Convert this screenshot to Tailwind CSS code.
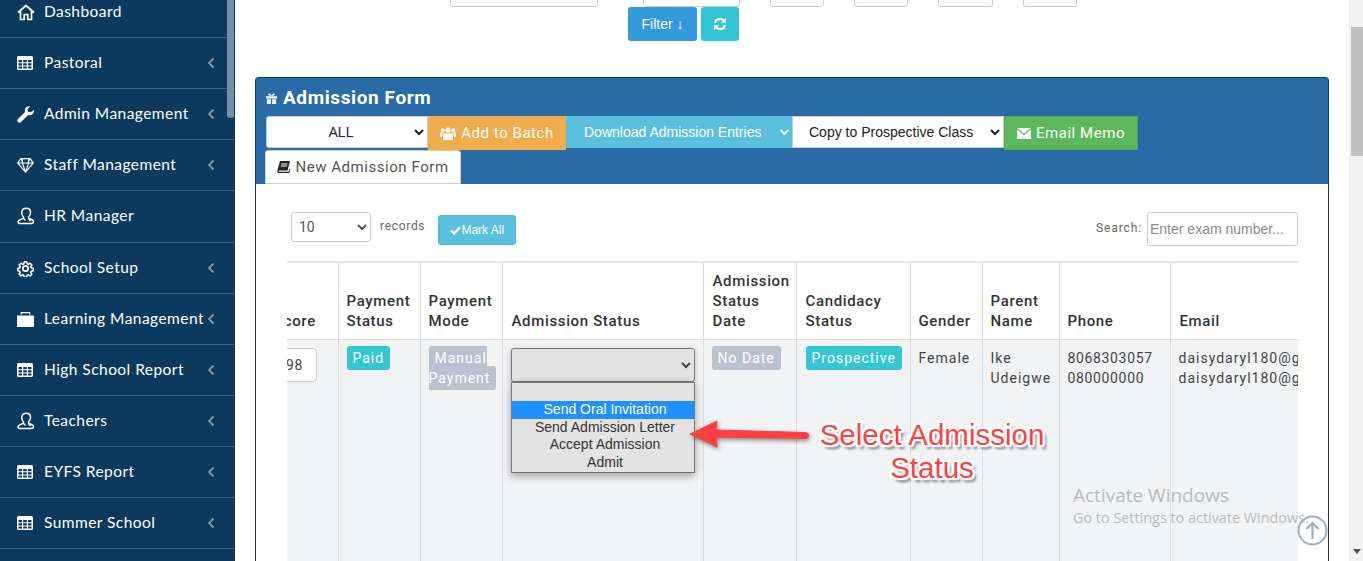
<!DOCTYPE html>
<html lang="en">
<head>
  <meta charset="UTF-8">
  <title>Admission Form</title>
  <script src="https://cdn.jsdelivr.net/npm/@tailwindcss/browser@4"></script>
</head>
<body class="bg-white">

<!-- icon sprites -->
<svg class="hidden">
  <symbol id="i-table" viewBox="0 0 16 14"><path fill="currentColor" fill-rule="evenodd" d="M1.500 0h13A1.500 1.500 0 0 1 16 1.500v11a1.500 1.500 0 0 1-1.500 1.500h-13A1.500 1.500 0 0 1 0 12.500v-11A1.500 1.500 0 0 1 1.500 0zM1.500 4v2.200h3.500V4zm4.700 0v2.200h3.600V4zm4.800 0v2.200h3.500V4zM1.500 7.300v2.200h3.500V7.300zm4.700 0v2.200h3.600V7.300zm4.800 0v2.200h3.500V7.300zM1.500 10.600v2h3.500v-2zm4.700 0v2h3.600v-2zm4.800 0v2h3.500v-2z"/></symbol>
  <symbol id="i-user" viewBox="0 0 18 18"><path fill="none" stroke="currentColor" stroke-width="1.500" stroke-linejoin="round" d="M9.500 1.200c2.600 0 4 2 4 4.300 0 1.700-.8 3.300-1.900 4.300v1.300c1 .9 5 1.300 5 3.200 0 1.300-1.200 2.200-2.500 2.200H2.800C1.800 16.500 1 15.700 1 14.800c0-2 4.200-2.600 5.500-3.700V9.800C5.300 8.800 4.700 7.200 4.700 5.500c0-2.500 2-4.300 4.800-4.300z"/><path fill="none" stroke="currentColor" stroke-width="1.300" d="M11.500 11.500l2 2.500M6.500 11.500l2 2"/></symbol>
  <symbol id="i-chev" viewBox="0 0 8 12"><path fill="none" stroke="currentColor" stroke-width="1.800" d="M6.500 1.500L2 6l4.500 4.500"/></symbol>
</svg>

<div class="relative flex h-[561px] w-[1363px] overflow-hidden font-['Roboto',sans-serif] text-[14px] text-[#333]">

  <!-- Sidebar -->
  <aside class="relative w-[235px] shrink-0 overflow-hidden bg-[#0b3a5e] font-['Lato',sans-serif] text-[15.500px] tracking-[0.45px] text-white">
    <nav class="-mt-[13px]">
      <a class="flex h-[51px] items-center border-b border-[#3f6484] pl-[17px]">
        <svg class="w-[18px] h-[17px]" viewBox="0 0 18 17"><path fill="none" stroke="white" stroke-width="1.700" stroke-linejoin="round" d="M1 8.500L9 1.500l8 7M3.500 7v8.500h3.700v-5h3.600v5h3.700V7"/></svg>
        <span class="ml-[9px]">Dashboard</span>
      </a>
      <a class="flex h-[51px] items-center border-b border-[#3f6484] pl-[17px]">
        <svg class="w-[16px] h-[14px] text-white"><use href="#i-table"/></svg>
        <span class="ml-[11px]">Pastoral</span>
        <svg class="absolute left-[207px] w-[8px] h-[12px] text-[#8297a8]"><use href="#i-chev"/></svg>
      </a>
      <a class="flex h-[51px] items-center border-b border-[#3f6484] pl-[17px]">
        <svg class="w-[17px] h-[17px]" viewBox="0 0 17 17"><path fill="white" d="M16.800 4c.3 1.800-.2 3.300-1.500 4.300-1.200 1-2.700 1.100-4.100.6L4 16c-.9.900-2.200.9-3 .1-.9-.8-.9-2.100 0-3l7-7.200c-.5-1.400-.3-2.900.7-4.100C9.800.600 11.400.100 13.100.400L10.500 3l.4 2.700 2.700.5z"/></svg>
        <span class="ml-[10px]">Admin Management</span>
        <svg class="absolute left-[207px] w-[8px] h-[12px] text-[#8297a8]"><use href="#i-chev"/></svg>
      </a>
      <a class="flex h-[51px] items-center border-b border-[#3f6484] pl-[17px]">
        <svg class="w-[17px] h-[15px]" viewBox="0 0 17 15"><path fill="white" fill-rule="evenodd" d="M3.500 0h10L17 5l-8.500 10L0 5zM4 1.300L1.900 4.400h3zM6 1.300L5.900 4.400h5.200L11 1.300zM13 1.300l-1 3.100h3.100zM2 5.600l5 5.800-2-5.800zM6.200 5.600l2.300 7 2.300-7zM12 5.600l-2 5.800 5-5.800z"/></svg>
        <span class="ml-[10px]">Staff Management</span>
        <svg class="absolute left-[207px] w-[8px] h-[12px] text-[#8297a8]"><use href="#i-chev"/></svg>
      </a>
      <a class="flex h-[52px] items-center border-b border-[#3f6484] pb-[2px] pl-[17px]">
        <svg class="w-[18px] h-[18px] text-white"><use href="#i-user"/></svg>
        <span class="ml-[9px]">HR Manager</span>
      </a>
      <a class="flex h-[51px] items-center border-b border-[#3f6484] pl-[17px]">
        <svg class="w-[17px] h-[17px]" viewBox="0 0 24 24"><path fill="none" stroke="white" stroke-width="2.400" stroke-linejoin="round" d="M10 1.500h4l.6 3.200 1.900.8 2.700-1.800 2.800 2.800-1.800 2.700.8 1.900 3.200.6v4l-3.200.6-.8 1.900 1.800 2.700-2.800 2.800-2.700-1.800-1.900.8-.6 3h-4l-.6-3-1.900-.8-2.700 1.800-2.800-2.800 1.800-2.700-.8-1.900-3-.6v-4l3-.6.8-1.900-1.800-2.700 2.800-2.800 2.700 1.800 1.900-.8z" transform="translate(1.200 1.200) scale(.9)"/><circle cx="12" cy="12" r="3.800" fill="none" stroke="white" stroke-width="2.400"/></svg>
        <span class="ml-[10px]">School Setup</span>
        <svg class="absolute left-[207px] w-[8px] h-[12px] text-[#8297a8]"><use href="#i-chev"/></svg>
      </a>
      <a class="flex h-[51px] items-center border-b border-[#3f6484] pl-[17px]">
        <svg class="w-[17px] h-[15px]" viewBox="0 0 17 15"><path fill="white" d="M0 3.500h17V15H0zM3.500 2.500V1.200C3.500.500 4 0 4.700 0h7.600c.7 0 1.200.500 1.200 1.200v1.300h-1.300V1.300H4.800v1.200z"/></svg>
        <span class="ml-[10px]">Learning Management</span>
        <svg class="absolute left-[207px] w-[8px] h-[12px] text-[#8297a8]"><use href="#i-chev"/></svg>
      </a>
      <a class="flex h-[51px] items-center border-b border-[#3f6484] pl-[17px]">
        <svg class="w-[16px] h-[14px] text-white"><use href="#i-table"/></svg>
        <span class="ml-[11px]">High School Report</span>
        <svg class="absolute left-[207px] w-[8px] h-[12px] text-[#8297a8]"><use href="#i-chev"/></svg>
      </a>
      <a class="flex h-[51px] items-center border-b border-[#3f6484] pl-[17px]">
        <svg class="w-[18px] h-[18px] text-white"><use href="#i-user"/></svg>
        <span class="ml-[9px]">Teachers</span>
        <svg class="absolute left-[207px] w-[8px] h-[12px] text-[#8297a8]"><use href="#i-chev"/></svg>
      </a>
      <a class="flex h-[51px] items-center border-b border-[#3f6484] pl-[17px]">
        <svg class="w-[16px] h-[14px] text-white"><use href="#i-table"/></svg>
        <span class="ml-[11px]">EYFS Report</span>
        <svg class="absolute left-[207px] w-[8px] h-[12px] text-[#8297a8]"><use href="#i-chev"/></svg>
      </a>
      <a class="flex h-[51px] items-center border-b border-[#3f6484] pl-[17px]">
        <svg class="w-[16px] h-[14px] text-white"><use href="#i-table"/></svg>
        <span class="ml-[11px]">Summer School</span>
        <svg class="absolute left-[207px] w-[8px] h-[12px] text-[#8297a8]"><use href="#i-chev"/></svg>
      </a>
    </nav>
    <div class="absolute left-[227px] top-0 h-[118px] w-[7px] rounded-b-[3px] bg-[#7590a6]"></div>
  </aside>

  <!-- Main -->
  <main class="relative w-[1114px] shrink-0">
    <!-- filter inputs cut off by the scroll position -->
    <div class="flex h-[7px] overflow-hidden">
      <div class="ml-[215px] -mt-[24px] h-[31px] w-[148px] rounded-[3px] border border-[#ccc]"></div>
      <div class="ml-[45px] -mt-[24px] h-[31px] w-[97px] rounded-[3px] border border-[#ccc]"></div>
      <div class="ml-[30px] -mt-[24px] h-[31px] w-[54px] rounded-[3px] border border-[#ccc]"></div>
      <div class="ml-[30px] -mt-[24px] h-[31px] w-[54px] rounded-[3px] border border-[#ccc]"></div>
      <div class="ml-[30px] -mt-[24px] h-[31px] w-[55px] rounded-[3px] border border-[#ccc]"></div>
      <div class="ml-[30px] -mt-[24px] h-[31px] w-[54px] rounded-[3px] border border-[#ccc]"></div>
    </div>
    <div class="ml-[393px] flex gap-[4px]">
      <button class="h-[34px] w-[69px] rounded-[3px] bg-[#3498db] font-['Liberation_Sans',sans-serif] text-[14px] text-white">Filter ↓</button>
      <button class="flex h-[34px] w-[38px] items-center justify-center rounded-[3px] bg-[#33c5d3]">
        <svg class="w-[14px] h-[14px]" viewBox="0 0 14 14"><path fill="none" stroke="white" stroke-width="2.200" d="M2 6c.4-2.400 2.400-4 5-4 1.700 0 3 .8 3.900 1.900M12 8c-.4 2.400-2.400 4-5 4-1.700 0-3-.8-3.900-1.900"/><path fill="white" d="M13 .8v5H8zM1 13.200v-5h5z"/></svg>
      </button>
    </div>

    <!-- Panel -->
    <section class="ml-[20px] mt-[36px] w-[1074px] rounded-t-[3px] border border-[#0b3a5e] h-[600px]">
      <header class="h-[106px] bg-[#286ba6]">
        <h2 class="flex h-[38px] items-center pl-[10px] pt-[2px] text-[19px] font-bold tracking-[0.6px] text-white">
          <svg class="mr-[6px] w-[11px] h-[11px]" viewBox="0 0 12 12"><path fill="white" d="M0 3.500h12V6H0zM1 6.800h4.300V12H1zM6.700 6.800H11V12H6.700zM6 3C4 3 2.500 2.500 2.500 1.300 2.500.300 4 -.200 6 2.500 8 -.200 9.500.300 9.500 1.300 9.500 2.500 8 3 6 3z"/></svg>
          Admission Form
        </h2>
        <div class="flex h-[34px] items-start pl-[10px]">
          <select class="h-[32px] w-[162px] rounded-l-[3px] border border-[#ccc] bg-white text-[14px] text-[#222] font-['Liberation_Sans',sans-serif] [text-align-last:center]"><option>ALL</option></select>
          <button class="flex h-[34px] w-[138px] items-center justify-center bg-[#f0ad4e] text-[15px] tracking-[0.55px] text-white">
            <svg class="mr-[5px] w-[16px] h-[13px]" viewBox="0 0 16 13"><g fill="white"><circle cx="8" cy="3" r="2.600"/><circle cx="2.800" cy="3.200" r="1.900"/><circle cx="13.200" cy="3.200" r="1.900"/><path d="M4.300 6.500h7.400c.8 0 1.300.6 1.300 1.300V13H3V7.800c0-.7.600-1.300 1.300-1.300zM0 6c0-.500.5-.8 1-.8h2.500L2.200 7v3H0zM16 6c0-.500-.5-.8-1-.8h-2.500L13.800 7v3H16z"/></g></svg>
            Add to Batch
          </button>
          <div class="relative h-[32px] w-[226px] bg-[#5bc0de] pl-[18px] font-['Liberation_Sans',sans-serif] text-[14px] leading-[32px] text-white">
            Download Admission Entries
            <svg class="absolute left-[214px] top-[13px] w-[9px] h-[7px]" viewBox="0 0 9 7"><path fill="none" stroke="white" stroke-width="1.800" d="M.8 1.200L4.500 5l3.700-3.800"/></svg>
          </div>
          <select class="h-[32px] w-[212px] border border-[#ccc] bg-white pl-[12px] text-[14px] text-[#222] font-['Liberation_Sans',sans-serif]"><option>Copy to Prospective Class</option></select>
          <button class="flex h-[34px] w-[134px] items-center justify-center border border-[#4cae4c] bg-[#5cb85c] text-[15px] tracking-[0.55px] text-white">
            <svg class="mr-[5px] w-[14px] h-[11px]" viewBox="0 0 14 11"><path fill="white" d="M0 0h14L7 5.500zM0 1.600v9.400h14V1.600L7 7.200z"/></svg>
            Email Memo
          </button>
        </div>
        <button class="ml-[9px] flex h-[34px] w-[196px] items-center justify-center rounded-t-[3px] border border-[#ccc] bg-white text-[15px] tracking-[0.55px] text-[#555]">
          <svg class="mr-[5px] w-[13px] h-[12px]" viewBox="0 0 13 12"><path fill="#222" d="M3 0h10l-2.500 9.500H2.200c-.8 0-.8 1.200 0 1.200h9.600L13 6.500V10l-1 2H1.800C.6 12 0 11 .3 9.800z"/><path fill="white" d="M4.400 2.500h6v.9h-6zM3.900 4.500h6v.9h-6z"/></svg>
          New Admission Form
        </button>
      </header>

      <div class="pl-[31px] pr-[30px] pt-[28px]">
        <div class="flex h-[34px] items-start justify-between pl-[4px]">
          <div class="flex items-start">
            <select class="h-[30px] w-[80px] rounded-[3px] border border-[#ccc] bg-white pl-[3px] text-[14px] text-[#555]"><option>10</option></select>
            <span class="ml-[9px] mt-[5px] text-[12px] tracking-[0.7px] text-[#666]">records</span>
            <button class="ml-[13px] mt-[3px] flex h-[30px] w-[78px] items-center justify-center rounded-[3px] border border-[#46b8da] bg-[#5bc0de] font-['Liberation_Sans',sans-serif] text-[12px] text-white">
              <svg class="w-[11px] h-[9px]" viewBox="0 0 11 9"><path fill="none" stroke="white" stroke-width="2.200" d="M1 4.500l3 3 6-6"/></svg>Mark All
            </button>
          </div>
          <div class="flex items-start">
            <span class="mr-[5px] mt-[7px] text-[12px] tracking-[0.9px] text-[#666]">Search:</span>
            <input class="h-[34px] w-[151px] rounded-[3px] border border-[#ccc] bg-white pl-[2px] font-['Liberation_Sans',sans-serif] text-[14px] placeholder:text-[#8a8a8a]" placeholder="Enter exam number...">
          </div>
        </div>

        <div class="mt-[15px] w-[1011px] overflow-hidden border-t-2 border-[#e6e6e6]">
          <table class="-ml-[18px] w-[1061px] table-fixed border-collapse tracking-[1px]">
            <colgroup>
              <col class="w-[69px]"><col class="w-[82px]"><col class="w-[82px]"><col class="w-[201px]"><col class="w-[93px]">
              <col class="w-[114px]"><col class="w-[72px]"><col class="w-[77px]"><col class="w-[111px]"><col class="w-[160px]">
            </colgroup>
            <thead>
              <tr class="border-b border-[#dcdcdc] text-left align-bottom text-[15px] leading-[20px] tracking-[0.65px]">
                <th class="border-r border-[#dcdcdc] pl-[5px] pr-[8px] py-[8px] font-medium">Score</th>
                <th class="border-r border-[#dcdcdc] px-[8px] py-[8px] font-medium">Payment Status</th>
                <th class="border-r border-[#dcdcdc] px-[8px] py-[8px] font-medium">Payment Mode</th>
                <th class="border-r border-[#dcdcdc] pl-[9px] pr-[8px] py-[8px] font-medium">Admission Status</th>
                <th class="border-r border-[#dcdcdc] pl-[9px] pr-[8px] py-[8px] font-medium">Admission Status Date</th>
                <th class="border-r border-[#dcdcdc] pl-[9px] pr-[8px] py-[8px] font-medium">Candidacy Status</th>
                <th class="border-r border-[#dcdcdc] px-[8px] py-[8px] font-medium">Gender</th>
                <th class="border-r border-[#dcdcdc] px-[8px] py-[8px] font-medium">Parent Name</th>
                <th class="border-r border-[#dcdcdc] px-[8px] py-[8px] font-medium">Phone</th>
                <th class="pl-[9px] pr-[8px] py-[8px] font-medium">Email</th>
              </tr>
            </thead>
            <tbody>
              <tr class="h-[300px] bg-[#f2f3f5] align-top leading-[20px] text-[#444]">
                <td class="border-r border-[#dcdcdc] pr-[21px] pt-[8px]">
                  <div class="flex h-[34px] w-[48px] items-center justify-end rounded-[4px] border border-[#ccc] bg-white pr-[13px] tracking-[0.6px]">98</div>
                </td>
                <td class="border-r border-[#dcdcdc] px-[8px] pt-[8px]">
                  <span class="rounded-[3px] bg-[#35c6d3] px-[6px] py-[4px] text-white">Paid</span>
                </td>
                <td class="border-r border-[#dcdcdc] px-[8px] pt-[8px]">
                  <span class="rounded-[3px] bg-[#b9c2cf] px-[6px] py-[4px] text-white">Manual Payment</span>
                </td>
                <td class="border-r border-[#dcdcdc] px-[8px] pt-[8px]">
                  <select class="h-[34px] w-[184px] rounded-[3px] border border-[#777] bg-[#e3e3e3] shadow-[0_2px_6px_rgba(0,0,0,0.25)]"><option></option></select>
                </td>
                <td class="border-r border-[#dcdcdc] px-[8px] pt-[8px]">
                  <span class="rounded-[3px] bg-[#b9c2cf] px-[6px] py-[4px] text-white">No Date</span>
                </td>
                <td class="border-r border-[#dcdcdc] px-[9px] pt-[8px]">
                  <span class="rounded-[3px] bg-[#35c6d3] px-[6px] py-[4px] text-white">Prospective</span>
                </td>
                <td class="border-r border-[#dcdcdc] px-[8px] pt-[8px]">Female</td>
                <td class="border-r border-[#dcdcdc] px-[8px] pt-[8px]">Ike Udeigwe</td>
                <td class="border-r border-[#dcdcdc] px-[8px] pt-[8px] tracking-[0.65px]">8068303057<br>080000000</td>
                <td class="whitespace-nowrap px-[8px] pt-[8px]">daisydaryl180@gmail.com<br>daisydaryl180@gmail.com</td>
              </tr>
            </tbody>
          </table>
        </div>
      </div>
    </section>

    <!-- Open select list -->
    <ul class="absolute left-[276px] top-[382px] h-[91px] w-[184px] border border-[#777] bg-[#e3e3e3] pl-[4px] pt-[18px] text-center font-['Liberation_Sans',sans-serif] text-[14px] leading-[17.500px] text-[#333] shadow-[0_3px_8px_rgba(0,0,0,0.35)]">
      <li class="-ml-[4px] bg-[#1e90ff] pl-[4px] text-white">Send Oral Invitation</li>
      <li>Send Admission Letter</li>
      <li>Accept Admission</li>
      <li>Admit</li>
    </ul>

    <!-- Annotation -->
    <svg class="absolute left-[450px] top-[415px] w-[130px] h-[40px]" viewBox="0 0 130 40">
      <path fill="#ff4040" stroke="#ff4040" stroke-linejoin="round" stroke-width="1" d="M5 19L32 6l-1 9 89 2.500c5 0 5 6 0 6L31 22l1 10z" style="filter:drop-shadow(1px 2px 2px rgba(0,0,0,.45))"/>
    </svg>
    <div class="absolute left-[567px] top-[418px] w-[260px] text-center font-['Liberation_Sans',sans-serif] text-[29.500px] leading-[33px] text-[#ff4040] [text-shadow:0_0_2px_#fff,2px_0_1px_#fff,-2px_0_1px_#fff,0_2px_1px_#fff,0_-2px_1px_#fff,2px_2px_1px_#fff,-2px_-2px_1px_#fff,2px_-2px_1px_#fff,-2px_2px_1px_#fff,3px_4px_3px_rgba(0,0,0,0.6)]">Select Admission Status</div>

    <!-- Windows watermark -->
    <div class="absolute left-[838px] top-[483px] font-['Open_Sans',sans-serif] text-[#b9bbbd]">
      <p class="text-[19px] leading-[24px]">Activate Windows</p>
      <p class="whitespace-nowrap text-[14.400px] leading-[22px]">Go to Settings to activate Windows.</p>
    </div>
    <svg class="absolute left-[1062px] top-[515px] w-[31px] h-[31px]" viewBox="0 0 31 31">
      <circle cx="15.500" cy="15.500" r="14" fill="none" stroke="#9fb0c4" stroke-width="2"/>
      <path fill="none" stroke="#9fb0c4" stroke-width="2.200" d="M15.500 24V8M9.500 14l6-6 6 6"/>
    </svg>
  </main>

  <!-- Page scrollbar -->
  <div class="relative w-[14px] shrink-0 bg-[#f1f1f1]">
    <div class="absolute left-[2px] top-[27px] h-[129px] w-[12px] bg-[#c1c1c1]"></div>
    <svg class="absolute left-[4px] top-[549px] w-[8px] h-[5px]" viewBox="0 0 8 5"><path fill="#505050" d="M0 0h8L4 5z"/></svg>
  </div>
</div>

</body>
</html>
